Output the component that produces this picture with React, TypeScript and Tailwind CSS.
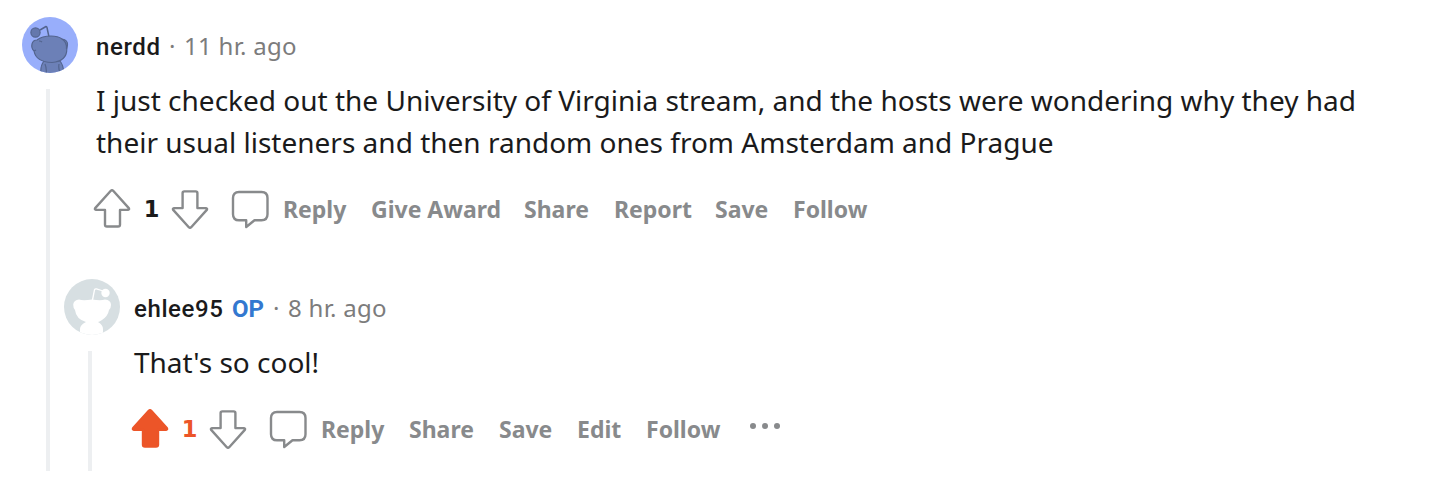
import type { ReactNode } from "react";

const labelFont = "font-['Noto_Sans',sans-serif]";

function UpArrow({ active = false }: { active?: boolean }) {
  return (
    <svg width="38" height="40" viewBox="0 0 38 40" className="block shrink-0" strokeLinejoin="round" strokeWidth="2.4">
      <path
        d="M17.8 1.8Q19 .7 20.2 1.8L35.8 19.1Q36.6 20.6 35 20.9H27V35.7Q27 37.5 25 37.5H14Q12 37.5 12 35.7V20.9H3Q1.4 20.6 2.2 19.1Z"
        fill={active ? "#ec5528" : "none"}
        stroke={active ? "#ec5528" : "#888a8c"}
      />
    </svg>
  );
}

function DownArrow() {
  return (
    <svg width="38" height="40" viewBox="0 0 38 40" className="block shrink-0" strokeLinejoin="round" strokeWidth="2.4">
      <path
        d="M20.2 38.2Q19 39.3 17.8 38.2L2.2 20.9Q1.4 19.4 3 19.1H11.6V4Q11.6 2.4 13.3 2.4H24.7Q26.4 2.4 26.4 4V19.1H35Q36.6 19.4 35.8 20.9Z"
        fill="none"
        stroke="#888a8c"
      />
    </svg>
  );
}

function Bubble() {
  return (
    <svg width="40" height="40" viewBox="0 0 40 40" className="block shrink-0">
      <path
        d="M9 3H31.5Q37.5 3 37.5 9V25.3Q37.5 31.3 31.5 31.3H24.5L16.2 38V31.3H9Q3 31.3 3 25.3V9Q3 3 9 3Z"
        fill="none"
        stroke="#888a8c"
        strokeWidth="2.4"
        strokeLinejoin="round"
      />
    </svg>
  );
}

function BlueAvatar() {
  return (
    <svg width="56" height="56" viewBox="0 0 56 56" className="block shrink-0">
      <clipPath id="blue-avatar">
        <circle cx="28" cy="28" r="28" />
      </clipPath>
      <g clipPath="url(#blue-avatar)" stroke="#53648f" strokeWidth="1.2" strokeLinejoin="round">
        <rect width="56" height="56" fill="#98aefb" stroke="none" />
        <path d="M18 13L24 9.5Q25 9.5 25.3 12L27 20" fill="none" strokeWidth="1.5" />
        <circle cx="13.5" cy="15.5" r="4.6" fill="#6578ad" />
        <path d="M19 57Q18 49 22 44H38Q42 49 41.5 57Z" fill="#6c80b7" />
        <path d="M24 57Q25 52 23 47M37 47Q36 53 39 57" fill="none" />
        <path d="M15 23Q20 19 29 19Q36 19 40 22Q46 23 45.5 28Q45 31 44.8 32Q45 44 30 45.5Q14 45 12 34Q9 31 10 27Q11 23 15 23Z" fill="#6c80b7" />
        <path d="M12 34L14 33M40 22Q45 25 44.5 32M17 24Q19 24 20 25" fill="none" />
      </g>
    </svg>
  );
}

function GrayAvatar() {
  return (
    <svg width="56" height="56" viewBox="0 0 56 56" className="block shrink-0">
      <clipPath id="gray-avatar">
        <circle cx="28" cy="28" r="28" />
      </clipPath>
      <g clipPath="url(#gray-avatar)" fill="#fff">
        <rect width="56" height="56" fill="#d7dfe2" />
        <path d="M28.3 22L30.5 10.8Q31 9.6 32.5 9.9L39 12" fill="none" stroke="#fff" strokeWidth="1.3" />
        <circle cx="41.5" cy="14" r="4.2" />
        <path d="M15 20.5Q19 22 28 20.5Q37 22 41 20.5Q47 21 47 26Q47 29 45 31Q44 37 38 41Q35 43 34 43Q39 46 39 50V57H16V50Q16 46 22 43Q12 40 11 31Q9 29 9.3 25Q10 21 15 20.5Z" />
      </g>
    </svg>
  );
}

function Action({ children, className }: { children: ReactNode; className: string }) {
  return (
    <button className={`${labelFont} shrink-0 text-left whitespace-nowrap text-[23px] leading-[30px] font-bold text-[#888a8c] ${className}`}>
      {children}
    </button>
  );
}

function Votes({ active = false }: { active?: boolean }) {
  return (
    <div className="flex items-center">
      <UpArrow active={active} />
      <span
        className={`w-[40px] pb-px pl-px text-center font-['DejaVu_Sans',sans-serif] text-[22.5px] leading-[30px] font-bold ${active ? "text-[#ec5528]" : "text-[#1a1a1b]"}`}
      >
        1
      </span>
      <DownArrow />
    </div>
  );
}

function Meta({ children }: { children: ReactNode }) {
  return (
    <span className="whitespace-nowrap font-['Noto_Sans',sans-serif] text-[24px] leading-[34px] tracking-[0.28px] text-[#7c7c7c]">
      {children}
    </span>
  );
}

const nameStyle = "text-[24px] leading-[34px] font-medium text-[#1a1a1b]";
const bodyStyle = "font-['Noto_Sans',sans-serif] text-[28px] leading-[42px] text-[#1a1a1b]";

function ReplyComment() {
  return (
    <article className="mt-[47px] ml-[14px]">
      <header className="flex h-14 items-center">
        <GrayAvatar />
        <div className="mt-1 ml-[14px] flex items-baseline">
          <span className={`font-['Roboto',sans-serif] ${nameStyle} w-[98px] tracking-[0.6px]`}>ehlee95</span>
          <span className="w-[41px] font-['Roboto',sans-serif] text-[24px] font-bold text-[#3378d0]">OP</span>
          <span className="w-[15px]"><Meta>·</Meta></span>
          <Meta>8 hr. ago</Meta>
        </div>
      </header>
      <div className="flex pl-6">
        <div className="mt-4 w-1 shrink-0 bg-[#edeff1]" />
        <div className="pb-[19px] pl-[42px]">
          <p className={`${bodyStyle} mt-[6px]`}>That's so cool!</p>
          <div className="mt-[23px] -ml-[3px] flex h-[46px] items-center">
            <Votes active />
            <div className="ml-[21px] flex items-center">
              <Bubble />
              <Action className="ml-[13px] w-[88px]">Reply</Action>
              <Action className="w-[90px]">Share</Action>
              <Action className="w-[78px]">Save</Action>
              <Action className="w-[69px]">Edit</Action>
              <Action className="w-[103px]">Follow</Action>
              <svg width="32" height="8" viewBox="0 0 32 8" className="-mt-[6px] block" fill="#888a8c">
                <circle cx="4" cy="4" r="3" />
                <circle cx="16" cy="4" r="3" />
                <circle cx="28" cy="4" r="3" />
              </svg>
            </div>
          </div>
        </div>
      </div>
    </article>
  );
}

export default function App() {
  return (
    <main className="h-[500px] w-[1442px] overflow-hidden bg-white pt-[17px] pl-[22px]">
      <article>
        <header className="flex h-14 items-center">
          <BlueAvatar />
          <div className="mt-[2px] ml-[18px] flex items-baseline">
            <span className={`font-['Roboto',sans-serif] ${nameStyle} w-[73px] tracking-[0.6px]`}>nerdd</span>
            <span className="w-[15px]"><Meta>·</Meta></span>
            <Meta>11 hr. ago</Meta>
          </div>
        </header>
        <div className="flex pl-6">
          <div className="mt-[16px] w-1 shrink-0 bg-[#edeff1]" />
          <div>
            <div className="pl-[46px]">
              <p className={`${bodyStyle} mt-[6px] whitespace-nowrap`}>
                I just checked out the University of Virginia stream, and the hosts were wondering why they had
                <br />
                their usual listeners and then random ones from Amsterdam and Prague
              </p>
              <div className="mt-[23px] -ml-[3px] flex h-[46px] items-center">
                <Votes />
                <div className="ml-[21px] flex items-center">
                  <Bubble />
                  <Action className="ml-[13px] w-[88px]">Reply</Action>
                  <Action className="w-[153px]">Give Award</Action>
                  <Action className="w-[90px]">Share</Action>
                  <Action className="w-[101px]">Report</Action>
                  <Action className="w-[78px]">Save</Action>
                  <Action className="w-[80px]">Follow</Action>
                </div>
              </div>
            </div>
            <ReplyComment />
          </div>
        </div>
      </article>
    </main>
  );
}
